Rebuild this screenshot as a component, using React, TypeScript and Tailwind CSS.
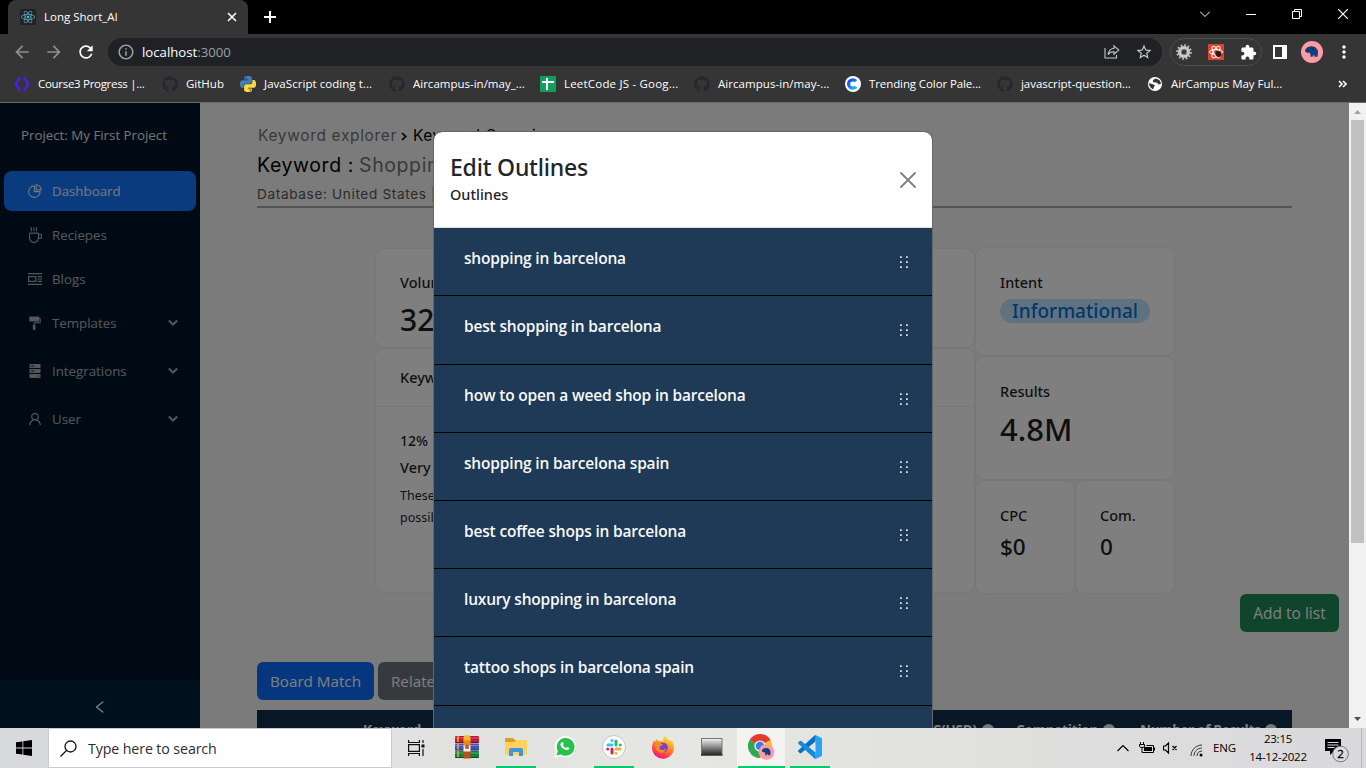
import type { ReactNode } from "react";
import {
  AiOutlinePieChart,
  AiOutlineCoffee,
  AiFillFormatPainter,
  AiFillHdd,
  AiOutlineUser,
  AiOutlineLeft,
} from "react-icons/ai";
import { FaReact, FaGithub } from "react-icons/fa";
import { MdExtension, MdStarBorder, MdMoreVert, MdRefresh, MdArrowBack, MdArrowForward, MdInfoOutline } from "react-icons/md";

const PY =
  "M14.25.18l.9.2.73.26.59.3.45.32.34.34.25.34.16.33.1.3.04.26.02.2-.01.13V8.5l-.05.63-.13.55-.21.46-.26.38-.3.31-.33.25-.35.19-.35.14-.33.1-.3.07-.26.04-.21.02H8.77l-.69.05-.59.14-.5.22-.41.27-.33.32-.27.35-.2.36-.15.37-.1.35-.07.32-.04.27-.02.21v3.06H3.17l-.21-.03-.28-.07-.32-.12-.35-.18-.36-.26-.36-.36-.35-.46-.32-.59-.28-.73-.21-.88-.14-1.05-.05-1.23.06-1.22.16-1.04.24-.87.32-.71.36-.57.4-.44.42-.33.42-.24.4-.16.36-.1.32-.05.24-.01h.16l.06.01h8.16v-.83H6.18l-.01-2.75-.02-.37.05-.34.11-.31.17-.28.25-.26.31-.23.38-.2.44-.18.51-.15.58-.12.64-.1.71-.06.77-.04.84-.02 1.27.05zm-6.3 1.98l-.23.33-.08.41.08.41.23.34.33.22.41.09.41-.09.33-.22.23-.34.08-.41-.08-.41-.23-.33-.33-.22-.41-.09-.41.09z";

function PythonIcon() {
  return (
    <svg width="16" height="16" viewBox="0 0 24 24">
      <path d={PY} fill="#3f7fb5" />
      <path d={PY} fill="#ffd845" transform="rotate(180 12 12)" />
    </svg>
  );
}

function CourseIcon() {
  return (
    <svg width="16" height="16" viewBox="0 0 16 16" fill="none" stroke="#4a23e0" strokeWidth="2.4">
      <path d="M6.3 1 1.6 8l4.7 7M9.7 1l4.7 7-4.7 7" />
    </svg>
  );
}

function SheetIcon() {
  return (
    <svg width="16" height="16" viewBox="0 0 16 16">
      <rect width="16" height="16" rx="1" fill="#12a05c" />
      <path d="M2 6h12M7 2v12" stroke="#fff" strokeWidth="2" />
    </svg>
  );
}

function ColorCircleIcon() {
  return (
    <svg width="16" height="16" viewBox="0 0 16 16">
      <defs>
        <linearGradient id="cc" x1="0" y1="0" x2="1" y2="1">
          <stop offset="0" stopColor="#1b3fe8" />
          <stop offset="1" stopColor="#0cc9f5" />
        </linearGradient>
      </defs>
      <circle cx="8" cy="8" r="8" fill="#fff" />
      <path d="M11 5.3A4.2 4.2 0 1 0 11 10.7" fill="none" stroke="url(#cc)" strokeWidth="3.2" />
    </svg>
  );
}

function GlobeIcon() {
  return (
    <svg width="16" height="16" viewBox="0 0 16 16">
      <circle cx="8" cy="8" r="7" fill="#fff" />
      <path d="M8.500 2.500C7.500 3.500 6 3.500 5.800 5c0 1.300 1.500 1.500 3 1.400 1.700-.1 2.300.9 2 1.800 1.500.3 2.300 0 3.200-.5-.2-2.500-2-4.700-5.500-5.200zM2 7c1.800 1 4.300 1 5.400 2.100.9 1-.3 1.900-.8 2.700-.3.600-.1 1.200-.2 1.700C3.800 12.500 2 10.200 2 7z" fill="#353535" />
    </svg>
  );
}

function Elephant({ size }: { size: number }) {
  return (
    <svg width={size} height={size} viewBox="0 0 22 22" className="shrink-0">
      <circle cx="11" cy="11" r="11" fill="#ff9ba4" />
      <path d="M4 9.500C4.500 7 6.500 5.500 9.500 5.400c2-.4 4.500.3 5.800 1.800 1.800 1.500 2 3.500 1.600 5.800l-.4 2.800h-3l-.3-2.300-1.700 2.200H9.400c.4-2-.1-3.500-1.400-4.200-.7.300-1 .8-1.800.3C5.300 11.300 4.200 11 4 9.500z" fill="#12427b" />
      <path d="M9.500 7.300c1.500-.8 3 .2 2.500 2.500M6 9.500l1.500.5" stroke="#0a2447" strokeWidth="1" fill="none" />
    </svg>
  );
}

function GearIcon() {
  return (
    <svg width="16" height="16" viewBox="0 0 16 16" fill="none">
      <circle cx="8" cy="8" r="6.700" stroke="#bdbdbd" strokeWidth="2.200" strokeDasharray="1.750 1.750" />
      <circle cx="8" cy="8" r="4.500" stroke="#c9c9c9" strokeWidth="3" />
      <circle cx="8" cy="8" r="2.700" stroke="#8f8f8f" strokeWidth=".8" />
    </svg>
  );
}

function ShareIcon() {
  return (
    <svg width="16" height="16" viewBox="0 0 16 16" fill="none" stroke="#c4c7c9" strokeWidth="1.1">
      <path d="M1 4v10h11.500v-3M10 1.800 14.800 6 10 10.200V7.800C7.500 7.700 5.500 8.500 4 10.700 4.500 7.500 6.500 4.700 10 4.300z" />
    </svg>
  );
}

function Chevron() {
  return (
    <svg width="12" height="8" viewBox="0 0 12 8" fill="none" stroke="currentColor" strokeWidth="2">
      <path d="M1.800 1.500 6 5.500l4.200-4" />
    </svg>
  );
}

function BlogIcon() {
  return (
    <svg width="14" height="14" viewBox="0 0 14 14" fill="none" stroke="currentColor" strokeWidth="1.200" className="mx-px">
      <path d="M0 1.600h14M0 12.400h14M9.700 4.700H14M9.700 7H14M9.700 9.300H14" />
      <rect x=".6" y="4.600" width="7.200" height="4.800" />
    </svg>
  );
}

const bookmarks: { w: string; icon: ReactNode; label: string; t: string }[] = [
  { w: "w-[148px]", icon: <CourseIcon />, label: "Course3 Progress |...", t: "tracking-[-0.3px]" },
  { w: "w-[78px]", icon: <FaGithub size={16} color="#24292f" />, label: "GitHub", t: "tracking-[0px]" },
  { w: "w-[149px]", icon: <PythonIcon />, label: "JavaScript coding t...", t: "tracking-[0.05px]" },
  { w: "w-[151px]", icon: <FaGithub size={16} color="#24292f" />, label: "Aircampus-in/may_...", t: "tracking-[0px]" },
  { w: "w-[154px]", icon: <SheetIcon />, label: "LeetCode JS - Goog...", t: "tracking-[0.2px]" },
  { w: "w-[151px]", icon: <FaGithub size={16} color="#24292f" />, label: "Aircampus-in/may-...", t: "tracking-[0.05px]" },
  { w: "w-[152px]", icon: <ColorCircleIcon />, label: "Trending Color Pale...", t: "tracking-[-0.1px]" },
  { w: "w-[150px]", icon: <FaGithub size={16} color="#24292f" />, label: "javascript-question...", t: "tracking-[-0.05px]" },
  { w: "w-[150px]", icon: <GlobeIcon />, label: "AirCampus May Ful...", t: "tracking-[-0.05px]" },
];

function BrowserChrome() {
  return (
    <header className="flex h-[103px] flex-col border-b border-[#6a6a6a] bg-[#353535] text-white">
      <div className="flex h-[34px] items-stretch bg-black">
        <div className="ml-2 flex w-[240px] items-center rounded-t-lg bg-[#353535] pl-3 pr-[11px]">
          <span className="flex size-4 items-center justify-center rounded-[2px] bg-[#202226]">
            <FaReact size={14} color="#58b9d3" />
          </span>
          <span className="ml-2 grow text-[11.5px] tracking-[0px]">Long Short_AI</span>
          <svg width="10" height="10" viewBox="0 0 10 10" stroke="#fff" strokeWidth="1.600">
            <path d="M1 1l8 8M9 1 1 9" />
          </svg>
        </div>
        <div className="flex grow items-center pl-4">
          <svg width="12" height="12" viewBox="0 0 12 12" stroke="#fff" strokeWidth="2">
            <path d="M0 6h12M6 0v12" />
          </svg>
        </div>
        <div className="flex items-center gap-9 pb-[6px] pr-[18px]">
          <svg width="10" height="10" viewBox="0 0 10 10" fill="none" stroke="#fff" strokeWidth="1">
            <path d="M0 2.500l5 5 5-5" />
          </svg>
          <svg width="10" height="10" viewBox="0 0 10 10" stroke="#fff">
            <path d="M0 5.500h10" />
          </svg>
          <svg width="10" height="10" viewBox="0 0 10 10" fill="none" stroke="#fff">
            <path d="M.5 2.500h7v7h-7zM2.500 2.500v-2h7v7h-2" />
          </svg>
          <svg width="10" height="10" viewBox="0 0 10 10" stroke="#fff" strokeWidth="1.200">
            <path d="M0 0l10 10M10 0 0 10" />
          </svg>
        </div>
      </div>
      <div className="flex h-9 items-center pl-3">
        <div className="flex w-24 gap-3">
          <MdArrowBack size={20} color="#8f8f8f" />
          <MdArrowForward size={20} color="#8f8f8f" />
          <MdRefresh size={20} color="#ffffff" />
        </div>
        <div className="flex h-7 w-[1054px] items-center rounded-full bg-[#202124] pl-[9px] pr-[9px]">
          <MdInfoOutline size={18} color="#9aa0a6" />
          <span className="ml-[7px] grow pt-px text-[13.200px]">
            localhost<span className="text-[#9aa0a6]">:3000</span>
          </span>
          <ShareIcon />
          <MdStarBorder size={18} color="#c4c7c9" className="ml-[15px]" />
        </div>
        <div className="ml-2 flex h-7 w-[92px] items-center gap-4 rounded-full border border-[#4d4d4d] pl-[5px]">
          <GearIcon />
          <svg width="16" height="16" viewBox="0 0 16 16">
            <path d="M0 0h16v16H0z" fill="#d9442f" />
            <g fill="none" stroke="#fff" strokeWidth="1">
              <ellipse cx="8" cy="8" rx="6.500" ry="2.500" />
              <ellipse cx="8" cy="8" rx="6.500" ry="2.500" transform="rotate(60 8 8)" />
              <ellipse cx="8" cy="8" rx="6.500" ry="2.500" transform="rotate(120 8 8)" />
            </g>
            <ellipse cx="10.300" cy="10.300" rx="2.800" ry="3.200" fill="#3b1411" transform="rotate(-45 10 10)" />
          </svg>
          <MdExtension size={17} color="#fff" />
        </div>
        <svg width="14" height="14" viewBox="0 0 14 14" className="ml-[11px]">
          <path d="M1 1h12v12H1z" fill="none" stroke="#fff" strokeWidth="2" />
          <path d="M9 1h4v12H9z" fill="#fff" />
        </svg>
        <span className="ml-[14px]">
          <Elephant size={22} />
        </span>
        <MdMoreVert size={20} color="#fff" className="ml-[11px]" />
      </div>
      <div className="flex h-7 items-center pl-[14px] text-[11.500px]">
        {bookmarks.map((b, i) => (
          <div key={i} className={`flex shrink-0 items-center gap-2 whitespace-nowrap ${b.w}`}>
            <span className="w-4 shrink-0">{b.icon}</span>
            <span className={b.t}>{b.label}</span>
          </div>
        ))}
        <svg width="9" height="8" viewBox="0 0 9 8" fill="none" stroke="#fff" strokeWidth="1.600" className="ml-[41px]">
          <path d="M1 1l3 3-3 3M5 1l3 3-3 3" />
        </svg>
      </div>
    </header>
  );
}

function MenuItem({ icon, label, box, chevron }: { icon: ReactNode; label: string; box: string; chevron?: boolean }) {
  return (
    <div className={`mx-1 flex h-10 items-center pl-[23px] pr-[17px] text-[13.300px] ${box}`}>
      {icon}
      <span className="ml-[9px] grow pt-px">{label}</span>
      {chevron && (
        <span className="pb-px">
          <Chevron />
        </span>
      )}
    </div>
  );
}

function Sidebar() {
  return (
    <aside className="flex w-[200px] shrink-0 flex-col bg-[#001529] text-white/65">
      <div className="flex h-16 items-center pl-[21px] pt-px text-[13.300px] text-white/90">Project: My First Project</div>
      <nav className="flex grow flex-col pt-1">
        <MenuItem icon={<AiOutlinePieChart size={16} />} label="Dashboard" box="rounded-lg bg-[#1677ff] text-white/90" />
        <MenuItem icon={<AiOutlineCoffee size={16} />} label="Reciepes" box="mt-1" />
        <MenuItem icon={<BlogIcon />} label="Blogs" box="mt-1" />
        <MenuItem icon={<AiFillFormatPainter size={16} />} label="Templates" box="mt-1" chevron />
        <MenuItem icon={<AiFillHdd size={16} />} label="Integrations" box="mt-2" chevron />
        <MenuItem icon={<AiOutlineUser size={16} />} label="User" box="mt-2" chevron />
      </nav>
      <div className="flex h-12 items-center justify-center bg-[#00223c] pt-[6px] text-white">
        <AiOutlineLeft size={16} />
      </div>
    </aside>
  );
}

function Card({ className, children }: { className: string; children?: ReactNode }) {
  return <div className={`rounded-lg bg-white shadow-[0_0_2px_rgba(0,0,0,0.12)] ${className}`}>{children}</div>;
}

function HelpDot() {
  return <span className="ml-[5px] size-3 rounded-full bg-[#eee]" />;
}

function MainPage() {
  return (
    <main className="flex w-[1149px] shrink-0 flex-col bg-[#f7f7f7] pl-[57px] text-[#212529]">
      <div className="mr-[57px] flex flex-col whitespace-nowrap border-b-2 border-[#a8a8a8] pt-[17px] font-['Inter',sans-serif]">
        <div className="flex h-8 items-center pl-px text-[15.500px] tracking-[0.65px] text-[#737373]">
          Keyword explorer
          <svg width="6" height="9" viewBox="0 0 6 9" fill="none" stroke="#000" strokeWidth="1.700" className="ml-[4px] mr-[6px]">
            <path d="M1 1l3.700 3.500L1 8" />
          </svg>
          <span className="tracking-[0.5px] text-black">Keyword Overview</span>
        </div>
        <div className="flex h-7 items-center text-[19.500px] tracking-[0.600px] text-black">
          Keyword :<span className="ml-[5px] text-[#737373]">Shopping in barcelona</span>
        </div>
        <div className="flex h-[26px] items-center pt-[2px] text-[13.600px] tracking-[0.650px] text-[#555]">
          Database: United States | Currency: USD
        </div>
      </div>

      <div className="ml-[119px] mt-10 flex h-[345px] gap-[2px] font-['Noto_Sans',sans-serif] text-[#1f1f1f]">
        <div className="flex w-[598px] flex-col gap-[2px] pt-px">
          <Card className="h-[98px] pl-6 pt-[21px]">
            <div className="text-[14.500px] font-medium leading-6">Volume</div>
            <div className="mt-[6px] text-[30px] font-medium leading-10">320</div>
          </Card>
          <Card className="h-[243px]">
            <div className="flex h-[58px] items-center border-b border-[#eee] pl-6 text-[14.500px] font-medium">Keyword Difficulty</div>
            <div className="pl-6 pt-5 text-[14.500px] font-medium leading-[27px]">
              <div className="text-[14px]">12%</div>
              <div>Very Easy</div>
              <div className="pt-1 text-[12.500px] font-normal leading-[22px]">
                These keywords will be the easiest to rank. It is
                <br />
                possible to rank with good content.
              </div>
            </div>
          </Card>
        </div>
        <div className="flex w-[198px] flex-col gap-[2px]">
          <Card className="h-[107px] pl-6 pt-[22px]">
            <div className="text-[14.500px] font-medium leading-6">Intent</div>
            <div className="mt-[5px] flex h-6 w-[150px] items-center justify-center rounded-full bg-[#c0e4ff] pt-[1px] text-[19px] font-medium text-[#006fdd]">
              Informational
            </div>
          </Card>
          <Card className="h-[122px] pl-6 pt-[22px]">
            <div className="text-[14.500px] font-medium leading-6">Results</div>
            <div className="mt-[6px] text-[31px] font-medium leading-10">4.8M</div>
          </Card>
          <div className="flex h-[112px] gap-[2px]">
            <Card className="h-full w-[98px] pl-6 pt-[22px]">
              <div className="text-[14.500px] font-medium leading-6">CPC</div>
              <div className="text-[22.500px] font-medium leading-10">$0</div>
            </Card>
            <Card className="h-full w-[98px] pl-6 pt-[22px]">
              <div className="text-[14.500px] font-medium leading-6">Com.</div>
              <div className="text-[22.500px] font-medium leading-10">0</div>
            </Card>
          </div>
        </div>
      </div>

      <div className="mt-px flex justify-end pr-[10px]">
        <button className="flex h-[38px] w-[99px] items-center justify-center rounded-md bg-[#1f8a55] pt-px text-[15.500px] text-white">
          Add to list
        </button>
      </div>

      <div className="mt-[30px] flex gap-1 text-[15.200px] text-white">
        <button className="flex h-[38px] w-[117px] items-center justify-center rounded-md bg-[#0d6efd] pt-px">Board Match</button>
        <button className="flex h-[38px] w-[90px] items-center rounded-md bg-[#6c757d] pl-[13px] pt-px">Related</button>
      </div>

      <div className="mr-[57px] mt-[10px] flex h-10 shrink-0 items-center whitespace-nowrap bg-[#102f4b] text-[13.500px] font-bold tracking-[-0.150px] text-white">
        <span className="w-[590px] pl-[106px]">Keyword</span>
        <span className="flex w-[169px] items-center justify-end pr-[22px]">CPC(USD)<HelpDot /></span>
        <span className="flex w-[124px] items-center">Competition<HelpDot /></span>
        <span className="flex items-center tracking-[-0.300px]">Number of Results<HelpDot /></span>
      </div>
    </main>
  );
}

const outlines = [
  { text: "shopping in barcelona", h: "h-[68px]" },
  { text: "best shopping in barcelona", h: "h-[69px]" },
  { text: "how to open a weed shop in barcelona", h: "h-[68px]" },
  { text: "shopping in barcelona spain", h: "h-[68px]" },
  { text: "best coffee shops in barcelona", h: "h-[68px]" },
  { text: "luxury shopping in barcelona", h: "h-[68px]" },
  { text: "tattoo shops in barcelona spain", h: "h-[69px]" },
  { text: "", h: "h-[68px]" },
];

function DragDots() {
  return (
    <svg width="10" height="13" viewBox="0 0 10 13" fill="#fff" fillOpacity=".85">
      <path d="M1 .2h1.800V2H1zM7 .2h1.800V2H7zM1 5.200h1.800V7H1zM7 5.200h1.800V7H7zM1 10.200h1.800V12H1zM7 10.200h1.800V12H7z" />
    </svg>
  );
}

function OutlineModal() {
  return (
    <div className="absolute left-[434px] top-[29px] w-[498px] overflow-hidden rounded-t-lg outline outline-[#666]">
      <div className="flex h-24 items-center justify-between border-b border-[#dee2e6] bg-white pl-4 pr-4 font-['Noto_Sans',sans-serif] text-[#212529]">
        <div className="pb-px">
          <h2 className="text-[23px] font-medium leading-[30px] tracking-[-0.2px]">Edit Outlines</h2>
          <p className="text-[14.500px] font-medium leading-6">Outlines</p>
        </div>
        <svg width="16" height="16" viewBox="0 0 16 16" stroke="#7f7f7f" strokeWidth="1.800" strokeLinecap="round">
          <path d="M1 1l14 14M15 1 1 15" />
        </svg>
      </div>
      {outlines.map((o, i) => (
        <div key={i} className={`flex justify-between border-b border-black bg-[#1e3a57] pl-[30px] pr-[23px] ${o.h}`}>
          <span className="pt-[18px] text-[15.500px] font-semibold leading-6 tracking-[-0.180px] text-[#f8f9fa]">{o.text}</span>
          <span className="pt-[28px]">
            <DragDots />
          </span>
        </div>
      ))}
    </div>
  );
}

function Scrollbar() {
  return (
    <div className="flex w-[17px] flex-col items-center bg-[#f1f1f1]">
      <svg width="17" height="17" viewBox="0 0 17 17" fill="#a3a3a3">
        <path d="M5 11h7L8.500 7z" />
      </svg>
      <div className="h-[423px] w-[13px] bg-[#c1c1c1]" />
      <svg width="17" height="17" viewBox="0 0 17 17" fill="#505050" className="mt-auto">
        <path d="M5 6h7L8.500 10z" />
      </svg>
    </div>
  );
}

function WinrarIcon() {
  return (
    <svg width="24" height="24" viewBox="0 0 24 24">
      <rect y="1" width="24" height="7" rx="1" fill="#c2183c" />
      <rect y="8.500" width="24" height="7" rx="1" fill="#4650b8" />
      <rect y="16" width="24" height="7" rx="1" fill="#13803b" />
      <path d="M0 3h24M0 10.500h24M0 18h24" stroke="#fff" strokeOpacity=".3" />
      <path d="M0 7.500h24M0 15h24M0 22.500h24" stroke="#000" strokeOpacity=".4" />
      <path d="M3 1v22" stroke="#e8b12c" strokeWidth="1.500" strokeDasharray="6 1.500" />
      <rect x="8.500" y="15" width="7" height="8.500" fill="#b8501a" />
      <path d="M8.500 6V3q0-3 3.500-3t3.500 3v3z" fill="#f9b92d" />
      <rect x="8.500" y="5.500" width="7" height="5" fill="#e88a1a" />
      <path d="M8.500 10.500h1.800v3h3.400v-3h1.800v6h-7z" fill="#f3efe9" />
      <rect x="10.500" y="9.500" width="3" height="4.500" fill="#c96318" />
    </svg>
  );
}

function FolderIcon() {
  return (
    <svg width="22" height="18" viewBox="0 0 22 18">
      <path d="M0 1q0-1 1-1h7l2 2h10q1 0 1 1v3H0z" fill="#dd9f18" />
      <path d="M0 4h9l2-2h10.500q.5 0 .5.500V16q0 1-1 1H1q-1 0-1-1z" fill="#ffd25e" />
      <path d="M4 18v-6q0-2 2-2h10q2 0 2 2v6h-4v-4H8v4z" fill="#3d96db" />
    </svg>
  );
}

function WhatsappTile() {
  return (
    <svg width="22" height="22" viewBox="0 0 22 22">
      <path d="M.5 21.500 2.200 16A10.700 10.700 0 1 1 6.500 20z" fill="#fff" />
      <path d="M2.400 19.600 3.800 15A8.900 8.900 0 1 1 7 18.400z" fill="#29c24a" />
      <path d="M7.800 6.200c.8-.5 1.300 0 1.700 1.400.3.800-.3 1.100-.6 1.600.7 1.300 1.700 2.200 3 2.800.6-.4.900-1.200 1.500-1 1.500.6 2 .8 1.800 1.400-.5 1.700-2 2-3.600 1.500-3-1-4.800-3-5.200-5.300 0-1 .6-2 1.400-2.400z" fill="#fff" />
    </svg>
  );
}

function SlackTile() {
  return (
    <svg width="24" height="24" viewBox="0 0 24 24" fill="none" strokeWidth="3" strokeLinecap="round">
      <circle cx="12" cy="12" r="11.500" fill="#fff" stroke="#c4c4c4" strokeWidth="1" />
      <path d="M10 5.500v0M6 10h4" stroke="#36c5f0" />
      <path d="M14 6v4M18.300 10v0" stroke="#2eb67d" />
      <path d="M14 14h4M14 18.300v0" stroke="#ecb22e" />
      <path d="M10 14v4M5.700 14v0" stroke="#e01e5a" />
    </svg>
  );
}

function FirefoxIcon() {
  return (
    <svg width="24" height="24" viewBox="0 0 24 24">
      <defs>
        <linearGradient id="ff" x1=".8" y1="0" x2=".3" y2="1">
          <stop offset="0" stopColor="#fff14a" />
          <stop offset=".4" stopColor="#ff9a1f" />
          <stop offset=".8" stopColor="#ff3750" />
          <stop offset="1" stopColor="#e31587" />
        </linearGradient>
      </defs>
      <path d="M14 .5c1 2.500 3 3.500 5 5.500 1-.5 1-1 1-1.500 2 2.500 3 5 3 8A11 11 0 0 1 1 13c0-3.500 1-6 2.500-8 0 1 .2 1.600.8 2 .5-1.500 1-2.200 2-3 .2 1.300.7 2 1.700 2.200 1.500-.2 3-.2 4.500.3C12 4 12.500 2 14 .5z" fill="url(#ff)" />
      <circle cx="12" cy="12.500" r="4.800" fill="#7a3fd4" />
      <path d="M4 8c3-1 5 0 8 1.500-1 1.500-2.500 1-3.500 2.500-.5 2 1 3.500 3.500 3 1.500-.3 2-1.500 3-1.500-.5 3.500-3.500 5-6.500 4C5 16 4 12 4 8z" fill="#ff8a1e" />
    </svg>
  );
}

function DriveIcon() {
  return (
    <svg width="22" height="18" viewBox="0 0 22 18">
      <defs>
        <linearGradient id="dr" x1="0" y1="0" x2="0" y2="1">
          <stop offset="0" stopColor="#f4f4f4" />
          <stop offset="1" stopColor="#2b2b2b" />
        </linearGradient>
      </defs>
      <rect x=".5" y=".5" width="20.500" height="16" fill="url(#dr)" stroke="#777" />
      <path d="M0 17h21.500" stroke="#000" strokeWidth="1.200" />
    </svg>
  );
}

function ChromeTile() {
  return (
    <svg width="27" height="26" viewBox="0 0 27 26">
      <path d="M12 12 1.600 6A12 12 0 0 1 22.400 6z" fill="#e33b2e" />
      <path d="M12 12 22.400 6A12 12 0 0 1 12 24z" fill="#fbc116" />
      <path d="M12 12v12A12 12 0 0 1 1.600 6z" fill="#2da94f" />
      <path d="M12 6.500h10.700L22.400 6H12z" fill="#e33b2e" />
      <circle cx="12" cy="12" r="5.600" fill="#fff" />
      <circle cx="12" cy="12" r="4.400" fill="#3b7ded" />
      <circle cx="18.500" cy="18" r="7.800" fill="#ff9ba4" />
      <path d="M13.800 17c.5-2 2-3 4.200-3 3 0 4.500 1.800 4.500 4.300l-.2 3h-2.100l-.4-1.500-1.200 1.500h-1.400c.2-1.700 0-2.700-.9-3.100-.7.500-1.800-.2-2.500-1.200z" fill="#12427b" />
    </svg>
  );
}

function VsCodeIcon() {
  return (
    <svg width="24" height="24" viewBox="0 0 24 24">
      <path d="M17.500 6.500 3.300 17.900Q2.500 18.500 1.700 17.900L.4 16.800q-.8-.8 0-1.500L16.500.6q.6-.6 1.500-.4z" fill="#0a72bd" />
      <path d="M17.500 17.500 3.300 6.100Q2.500 5.500 1.700 6.100L.4 7.200q-.8.800 0 1.500l16.100 14.700q.6.600 1.500.4z" fill="#128bdb" />
      <path d="M17.500 0 23.200 2.700q.8.400.8 1.300v16q0 .9-.8 1.300L17.500 24z" fill="#2aa3f0" />
    </svg>
  );
}

const apps: { icon: ReactNode; w: string; bar: string }[] = [
  { icon: <WinrarIcon />, w: "w-[49px]", bar: "w-0" },
  { icon: <FolderIcon />, w: "w-[49px]", bar: "w-10" },
  { icon: <WhatsappTile />, w: "w-[49px]", bar: "w-0" },
  { icon: <SlackTile />, w: "w-[49px]", bar: "w-10" },
  { icon: <FirefoxIcon />, w: "w-[49px]", bar: "w-0" },
  { icon: <DriveIcon />, w: "w-[49px]", bar: "w-0" },
  { icon: <ChromeTile />, w: "ml-px w-12 bg-[#f3f3f1] pl-px", bar: "w-full" },
  { icon: <VsCodeIcon />, w: "w-[49px]", bar: "w-10" },
];

function Taskbar() {
  return (
    <footer className="flex h-10 items-center bg-linear-to-r from-[#d8d9dd] via-[#e6e7e2] to-[#d9d8db] text-black">
      <div className="flex w-[48px] justify-center">
        <svg width="16" height="16" viewBox="0 0 16 16">
          <path d="M0 2.300 6.500 1.400v6.200H0zM7.300 1.300 16 0v7.600H7.300zM0 8.400h6.500v6.200L0 13.700zM7.300 8.400H16V16l-8.700-1.300z" />
        </svg>
      </div>
      <div className="flex h-10 w-[344px] items-center border border-[#c9c9c9] bg-white pl-[11px]">
        <svg width="17" height="17" viewBox="0 0 17 17" fill="none" stroke="#111" strokeWidth="1.300">
          <circle cx="10.500" cy="6.500" r="5.500" />
          <path d="M6.500 10.500.5 16.500" />
        </svg>
        <span className="ml-[11px] pt-px text-[14.200px] tracking-[-0.100px] text-[#2d2d2d]">Type here to search</span>
      </div>
      <svg width="17" height="16" viewBox="0 0 17 16" fill="none" stroke="#111" strokeWidth="1.200" className="ml-4 mr-[17px]">
        <path d="M.6 0v2.500h10.800V0M.6 16v-2.500h10.800V16M.6 4.600h10.800v6.800H.6zM15 0v3M15 9v7" />
        <path d="M13.500 4.500h3v3h-3z" fill="#111" stroke="none" />
      </svg>
      {apps.map((a, i) => (
        <div key={i} className={`flex h-10 flex-col items-center ${a.w}`}>
          <div className="flex grow items-center">{a.icon}</div>
          <div className={`h-0.5 bg-[#00cc6a] ${a.bar}`} />
        </div>
      ))}
      <svg width="12" height="8" viewBox="0 0 12 8" fill="none" stroke="#000" strokeWidth="1.200" className="ml-auto mr-[10px]">
        <path d="M.5 7 6 1.500 11.500 7" />
      </svg>
      <svg width="16" height="12" viewBox="0 0 16 12" fill="none" stroke="#000" className="mr-2">
        <path d="M1.500 0v2M4.500 0v2M.5 2.500h5v2l-1.500 1h-2l-1.500-1zM3 5.500v5h11.500v-7H7.500" />
        <path d="M15 5.500v3" strokeWidth="2" />
        <path d="M5 5h8v4H5z" fill="#000" stroke="none" />
      </svg>
      <svg width="15" height="12" viewBox="0 0 15 12" fill="none" stroke="#000" strokeWidth="1.200" className="mr-3">
        <path d="M.5 4h2l3-3v10l-3-3h-2zM9.500 4l4 4M13.500 4l-4 4" />
      </svg>
      <svg width="13" height="13" viewBox="0 0 13 13" fill="none" stroke="#333" className="mr-[10px] mt-1">
        <path d="M1 12C1 6 6 1 12 1M4 12c0-4.500 3.500-8 8-8M7 12c0-3 2-5 5-5" />
        <circle cx="11" cy="11" r="1.500" fill="#000" stroke="none" />
      </svg>
      <span className="w-[35px] text-[11.500px] tracking-[-0.1px]">ENG</span>
      <div className="flex w-[60px] flex-col items-center text-[11.500px] leading-[18px] tracking-[-0.250px]">
        <span>23:15</span>
        <span>14-12-2022</span>
      </div>
      <svg width="25" height="25" viewBox="0 0 25 25" className="ml-[17px] mr-[11px] mt-1 shrink-0 font-['Open_Sans',sans-serif]">
        <path d="M0 1h16v12H9l-4 4v-4H0z" />
        <path d="M2.500 4.500h11M2.500 7h11M2.500 9.500h7" stroke="#ddd" />
        <circle cx="15.500" cy="16" r="7.800" fill="#dcdbde" stroke="#777" />
        <text x="15.500" y="20" fontSize="11.500" textAnchor="middle" stroke="#000" strokeWidth=".3">2</text>
      </svg>
      <div className="h-10 w-px bg-[#bbb]" />
      <div className="w-[4px]" />
    </footer>
  );
}

export default function App() {
  return (
    <div className="flex h-[768px] w-[1366px] flex-col overflow-hidden font-['Open_Sans',sans-serif]">
      <BrowserChrome />
      <div className="flex h-[625px] shrink-0">
        <div className="relative flex w-[1349px] overflow-hidden">
          <Sidebar />
          <MainPage />
          <div className="absolute inset-0 bg-black/50" />
          <OutlineModal />
        </div>
        <Scrollbar />
      </div>
      <Taskbar />
    </div>
  );
}
